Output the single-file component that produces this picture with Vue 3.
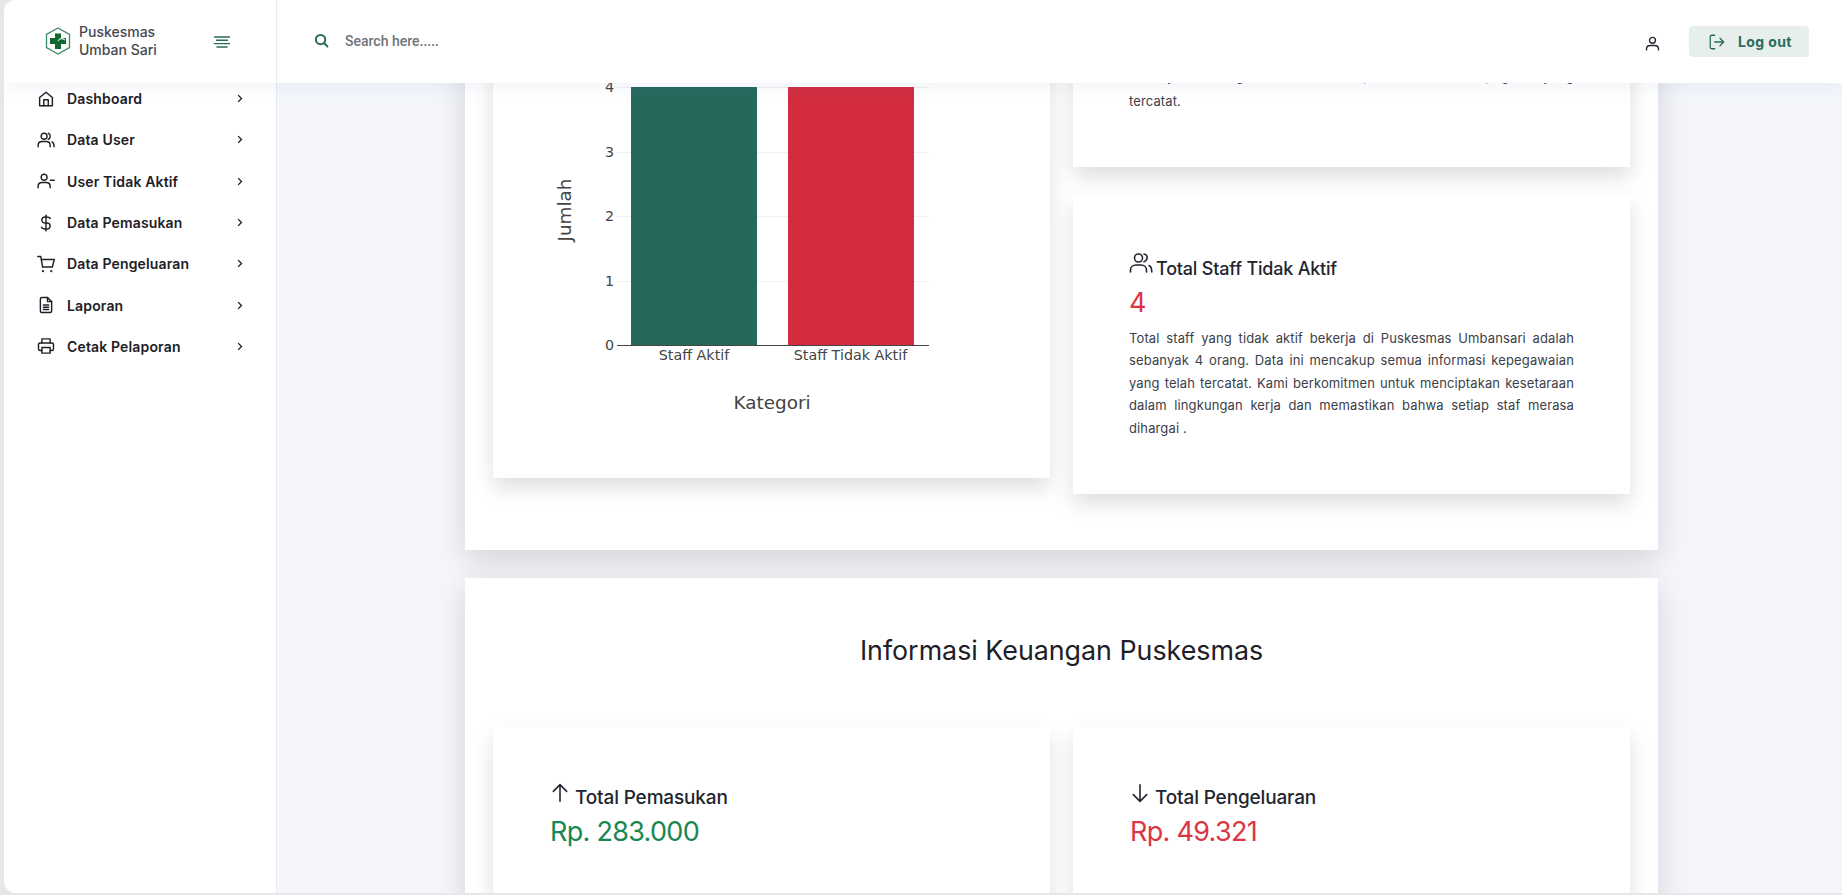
<template>
  <div class="shell">
    <header class="topbar">
      <div class="brand">
        <svg class="logo" viewBox="0 0 26 28" width="26" height="28">
          <path d="M13 1 L24.500 7.500 V20.500 L13 27 L1.500 20.500 V7.500 Z" fill="#fff" stroke="#3f8a66" stroke-width="1.300" />
          <path d="M10 6.500 H16 V11 H21 V17 H16 V22 H10 V17 H5 V11 H10 Z" fill="#11692f" />
          <path d="M13 14 C15 11 17 11 20 13" fill="none" stroke="#dcefe2" stroke-width="1.100" />
        </svg>
        <div class="brand-name">Puskesmas<br />Umban Sari</div>
        <svg class="burger" viewBox="0 0 16 12" width="16" height="12">
          <path d="M0 1 H16 M2 4.300 H14 M0 7.600 H16 M2.500 11 H13.500" stroke="#2a6b5e" stroke-width="1.400" />
        </svg>
      </div>
      <div class="search">
        <svg viewBox="0 0 24 24" width="15" height="15" fill="none" stroke="#2a6b5e" stroke-width="3.200" stroke-linecap="round">
          <circle cx="10.500" cy="10.500" r="7.500" />
          <path d="M16 16 L21.500 21.500" />
        </svg>
        <span class="search-text">Search here.....</span>
      </div>
      <svg class="user-icon" viewBox="0 0 24 24" width="17" height="17" fill="none" stroke="#22252e" stroke-width="1.900">
        <circle cx="12" cy="7.500" r="4.200" />
        <path d="M3.500 22 V20 C3.500 16.500 6 14.800 9 14.800 H15 C18 14.800 20.500 16.500 20.500 20 V22" />
      </svg>
      <button class="logout">
        <svg viewBox="0 0 24 24" width="18" height="18" fill="none" stroke="#2a6b5e" stroke-width="1.700" stroke-linecap="round" stroke-linejoin="round">
          <path d="M9 3 H5 A2 2 0 0 0 3 5 V19 A2 2 0 0 0 5 21 H9" />
          <path d="M9 12 H21 M16 7 L21 12 L16 17" />
        </svg>
        <span>Log out</span>
      </button>
    </header>

    <div class="body-row">
      <aside class="sidebar">
        <div v-for="item in menu" :key="item.label" class="nav-item">
          <svg class="nav-icon" viewBox="0 0 24 24" width="18" height="18" fill="none" stroke="#1d2026" stroke-width="1.900" stroke-linecap="round" stroke-linejoin="round">
            <path v-for="(d, i) in item.paths" :key="i" :d="d" />
            <circle v-for="(c, i) in item.circles" :key="'c' + i" :cx="c[0]" :cy="c[1]" :r="c[2]" />
          </svg>
          <span class="nav-label">{{ item.label }}</span>
          <svg class="chev" viewBox="0 0 8 12" width="6" height="9" fill="none" stroke="#1d2026" stroke-width="1.800">
            <path d="M1.500 1.500 L6 6 L1.500 10.500" />
          </svg>
        </div>
      </aside>

      <main class="content">
        <section class="panel panel-staff">
          <div class="chart-card card">
            <svg class="chart" viewBox="0 0 557 478" width="557" height="478">
              <g stroke="#eef0f3" stroke-width="1">
                <path v-for="g in grid" :key="g" :d="`M124 ${g} H436`" />
              </g>
              <rect x="138" y="87" width="126" height="258" fill="#26695c" />
              <rect x="295" y="87" width="126" height="258" fill="#d32c3e" />
              <path d="M124 345.500 H436" stroke="#444" stroke-width="1.200" />
              <g class="tick" text-anchor="end">
                <text x="121" y="92">4</text>
                <text x="121" y="157">3</text>
                <text x="121" y="221">2</text>
                <text x="121" y="286">1</text>
                <text x="121" y="350">0</text>
              </g>
              <g class="tick" text-anchor="middle">
                <text x="201" y="360">Staff Aktif</text>
                <text x="357.500" y="360">Staff Tidak Aktif</text>
              </g>
              <text class="axis-title" x="279" y="409" text-anchor="middle">Kategori</text>
              <text class="axis-title" transform="translate(78 210) rotate(-90)" text-anchor="middle">Jumlah</text>
            </svg>
          </div>
          <div class="side-cards">
            <div class="card stat-card stat-first">
              <p class="stat-text">Total staff yang aktif bekerja di Puskesmas Umbansari adalah sebanyak 4 orang. Data ini mencakup semua informasi pegawai yang tercatat.</p>
            </div>
            <div class="card stat-card">
              <h3 class="stat-title">
                <svg viewBox="0 0 24 24" width="24" height="24" fill="none" stroke="#22252e" stroke-width="1.600" stroke-linecap="round">
                  <circle cx="9.500" cy="7" r="4" />
                  <path d="M1.500 21 V19 C1.500 16 4 14 7 14 H12 C15 14 17.500 16 17.500 19 V21" />
                  <path d="M15 3 C17.500 3.500 18.500 5.500 18 7.500 C17.700 9 16.500 10.300 15 10.700" />
                  <path d="M20 14.500 C22 15.500 22.800 17 22.800 21" />
                </svg>
                <span class="title-text">Total Staff Tidak Aktif</span>
              </h3>
              <div class="stat-value red">4</div>
              <p class="stat-text">Total staff yang tidak aktif bekerja di Puskesmas Umbansari adalah sebanyak 4 orang. Data ini mencakup semua informasi kepegawaian yang telah tercatat. Kami berkomitmen untuk menciptakan kesetaraan dalam lingkungan kerja dan memastikan bahwa setiap staf merasa dihargai .</p>
            </div>
          </div>
        </section>

        <section class="panel panel-money">
          <h2 class="panel-title">Informasi Keuangan Puskesmas</h2>
          <div class="money-row">
            <div class="card money-card">
              <h3 class="stat-title money-title">
                <svg viewBox="0 0 24 24" width="20" height="20" fill="none" stroke="#22252e" stroke-width="1.900" stroke-linecap="round" stroke-linejoin="round">
                  <path d="M12 22 V2 M4 10 L12 2 L20 10" />
                </svg>
                <span class="title-text">Total Pemasukan</span>
              </h3>
              <div class="stat-value green">Rp. 283.000</div>
            </div>
            <div class="card money-card">
              <h3 class="stat-title money-title">
                <svg viewBox="0 0 24 24" width="20" height="20" fill="none" stroke="#22252e" stroke-width="1.900" stroke-linecap="round" stroke-linejoin="round">
                  <path d="M12 2 V22 M4 14 L12 22 L20 14" />
                </svg>
                <span class="title-text">Total Pengeluaran</span>
              </h3>
              <div class="stat-value red">Rp. 49.321</div>
            </div>
          </div>
        </section>
      </main>
    </div>
  </div>
</template>

<script setup>
const grid = [87.5, 152.5, 216.5, 281.5]

const menu = [
  { label: 'Dashboard', paths: ['M3.500 21 V10 L12 3 L20.500 10 V21 Z', 'M9 21 V13 H15 V21'] },
  { label: 'Data User', circles: [[9.500, 7, 4]], paths: ['M1.500 21 V19 C1.500 16 4 14 7 14 H12 C15 14 17.500 16 17.500 19 V21', 'M15 3 C18.500 4 18.500 10 15 11', 'M20 14.500 C22 15.500 22.800 17 22.800 21'] },
  { label: 'User Tidak Aktif', circles: [[9.500, 7, 4]], paths: ['M1.500 21 V19 C1.500 16 4 14 7 14 H12 C15 14 17.500 16 17.500 19 V21', 'M18 11 H23'] },
  { label: 'Data Pemasukan', paths: ['M12 1.500 V22.500', 'M17.500 6 C17 4.500 15 4 12 4 H11 C8 4 6.500 5.500 6.500 8 C6.500 10.500 8 12 11 12 H13 C16 12 17.500 13.500 17.500 16 C17.500 18.500 16 20 13 20 H11 C8 20 6.500 19 6 17.500'] },
  { label: 'Data Pengeluaran', circles: [[8, 21.500, 0.600], [19, 21.500, 0.600]], paths: ['M1 2 H5 L7.500 16 H20.500 L23 6 H6'] },
  { label: 'Laporan', paths: ['M4.500 4 A2 2 0 0 1 6.500 2 H14 L19.500 7.500 V20 A2 2 0 0 1 17.500 22 H6.500 A2 2 0 0 1 4.500 20 Z', 'M14 2 V7.500 H19.500', 'M8.500 12 H15.500 M8.500 15 H15.500 M8.500 18 H15.500'] },
  { label: 'Cetak Pelaporan', paths: ['M6.500 8 V2.500 H17.500 V8', 'M6.500 18 H4 A2 2 0 0 1 2 16 V10 A2 2 0 0 1 4 8 H20 A2 2 0 0 1 22 10 V16 A2 2 0 0 1 20 18 H17.500', 'M6.500 14 H17.500 V21.500 H6.500 Z'] },
]
</script>

<style>
html, body { margin: 0; background: #e6e7e9; overflow: hidden; }
</style>

<style scoped>
.shell { position: relative; box-sizing: border-box; width: 1838px; height: 893px; margin-left: 4px; overflow: hidden; border-radius: 12px 0 0 12px; background: #f4f6fb; font-family: Inter, "Liberation Sans", sans-serif; color: #22252e; }

.topbar { position: absolute; top: 0; left: 0; right: 0; height: 83px; z-index: 5; display: flex; align-items: center; background: #fff; box-shadow: 0 6px 16px rgba(90, 110, 170, 0.07); }
.brand { box-sizing: border-box; width: 273px; height: 83px; display: flex; align-items: center; padding-left: 41px; border-right: 1px solid #e6ebf2; }
.logo { flex-shrink: 0; margin-bottom: 1px; }
.brand-name { margin-left: 8px; font-size: 14px; line-height: 18.500px; font-weight: 500; color: #444853; width: 121px; margin-top: -1px; }
.burger { margin-left: 14px; }
.search { display: flex; align-items: center; margin-left: 37px; flex: 1; margin-top: -2px; }
.search-text { margin-left: 16px; font-family: Roboto, sans-serif; font-size: 14px; font-weight: 500; color: #6f7378; }
.user-icon { margin-right: 28px; margin-top: 3px; }
.logout { display: flex; align-items: center; gap: 12px; width: 120px; height: 31px; margin-right: 33px; padding: 0 0 0 19px; border: 0; border-radius: 4px; background: #e6efec; color: #2a6b5e; font-family: inherit; font-size: 14px; font-weight: 700; letter-spacing: 0.4px; }

.body-row { display: flex; height: 100%; }
.sidebar { box-sizing: border-box; width: 273px; flex-shrink: 0; padding-top: 78px; background: #fff; border-right: 1px solid #e6ebf2; }
.nav-item { display: flex; align-items: center; height: 41.300px; padding-left: 33px; }
.nav-icon { flex-shrink: 0; }
.nav-label { margin-left: 12px; width: 170px; font-size: 14px; font-weight: 600; color: #1d2026; letter-spacing: 0.15px; }
.chev { flex-shrink: 0; }

.content { flex: 1; padding-left: 188px; }
.panel { box-sizing: border-box; width: 1193px; padding: 0 28px; background: #fff; box-shadow: 0 10px 30px rgba(0, 0, 0, 0.14); }
.panel-staff { display: flex; gap: 23px; height: 550px; }
.panel-money { margin-top: 28px; height: 400px; }
.panel-title { margin: 0; padding-top: 56px; height: 92px; text-align: center; font-size: 26.800px; font-weight: 400; color: #1d2026; }
.card { background: #fff; box-shadow: 0 10px 20px rgba(0, 0, 0, 0.13); }
.chart-card { width: 557px; height: 478px; flex-shrink: 0; }
.chart { display: block; }
.tick text { font-family: "DejaVu Sans", sans-serif; font-size: 14.300px; fill: #444; }
.axis-title { font-family: "DejaVu Sans", sans-serif; font-size: 18.400px; fill: #444; }

.side-cards { width: 557px; display: flex; flex-direction: column; gap: 28px; }
.stat-card { box-sizing: border-box; padding: 56px 56px 0; height: 299px; }
.stat-first { height: 167px; padding: 0 56px 53px; display: flex; align-items: flex-end; }
.stat-title { display: flex; align-items: flex-start; gap: 3px; margin: 0; font-size: 18px; line-height: 24px; font-weight: 500; letter-spacing: -0.2px; color: #22252e; }
.title-text { padding-top: 6px; }
.stat-value { font-size: 27px; line-height: 36px; margin-top: 4px; letter-spacing: -0.7px; font-weight: 400; }
.red { color: #dc3545; }
.green { color: #198754; }
.stat-text { margin: 5.500px 0 0; font-size: 13px; line-height: 22.600px; font-weight: 400; letter-spacing: 0.12px; text-align: justify; color: #3c4048; }
.stat-first .stat-text { margin: 0; line-height: 25px; }

.money-row { display: flex; gap: 23px; margin-top: 1px; }
.money-card { box-sizing: border-box; width: 557px; height: 300px; padding: 56px 57px; }
.money-title { font-size: 19px; gap: 5px; letter-spacing: -0.15px; }
.money-card .title-text { padding-top: 3px; }
.money-card .stat-value { margin-top: 4px; }
</style>
